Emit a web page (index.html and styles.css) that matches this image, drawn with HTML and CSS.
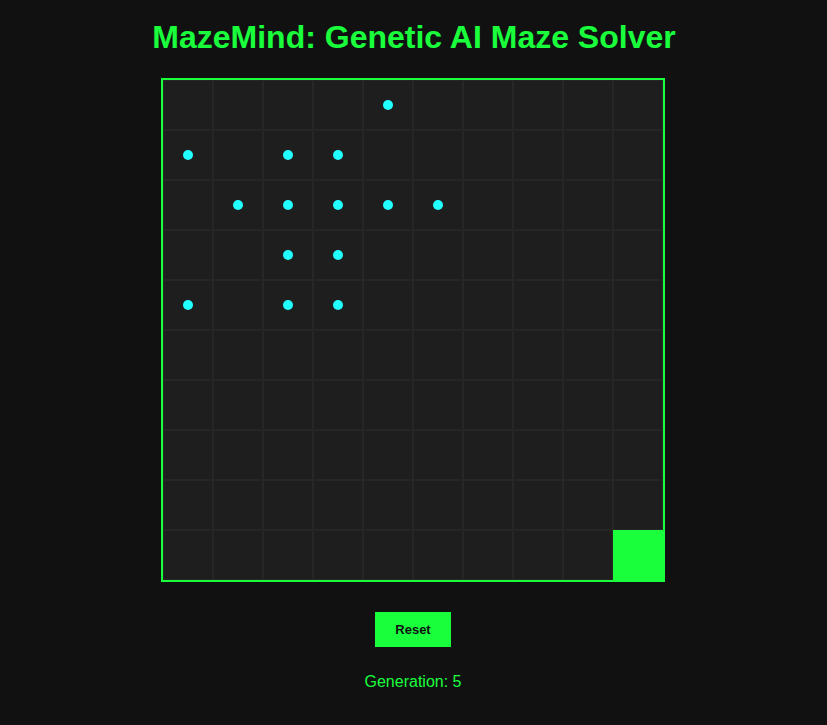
FILE: index.html
```html
<!DOCTYPE html>
<html>
<head>
<meta charset="utf-8">
<title>MazeMind</title>
<link rel="stylesheet" href="styles.css">
</head>
<body>
<main class="app">
  <h1 class="title">MazeMind: Genetic AI Maze Solver</h1>
  <div class="board">
    <div class="grid" id="grid"></div>
  </div>
  <button class="reset">Reset</button>
  <p class="gen">Generation: 5</p>
</main>
<script>
  var dots = ["4,0","0,1","2,1","3,1","1,2","2,2","3,2","4,2","5,2","2,3","3,3","0,4","2,4","3,4"];
  var grid = document.getElementById("grid");
  for (var r = 0; r < 10; r++) {
    for (var c = 0; c < 10; c++) {
      var cell = document.createElement("div");
      cell.className = "cell";
      if (r === 9 && c === 9) cell.className += " goal";
      if (dots.indexOf(c + "," + r) !== -1) {
        var d = document.createElement("span");
        d.className = "dot";
        cell.appendChild(d);
      }
      grid.appendChild(cell);
    }
  }
</script>
</body>
</html>
```

FILE: styles.css
```css
html, body {
  margin: 0;
  padding: 0;
  background: #111111;
}
body {
  font-family: "Liberation Sans", Arial, sans-serif;
  color: #1aff3c;
}
.app {
  display: flex;
  flex-direction: column;
  align-items: center;
  padding-right: 1px;
}
.title {
  margin: 19px 0 22px 2px;
  font-size: 32px;
  font-weight: bold;
  color: #1aff3c;
  line-height: 37px;
}
.board {
  border: 2px solid #1aff3c;
  background: #1e1e1e;
  width: 500px;
  height: 500px;
}
.grid {
  display: grid;
  grid-template-columns: repeat(10, 50px);
  grid-template-rows: repeat(10, 50px);
}
.cell {
  box-shadow: inset 1px 1px 0 #262626, inset -1px -1px 0 #262626;
  display: flex;
  align-items: center;
  justify-content: center;
}
.goal {
  background: #1aff3c;
  box-shadow: none;
}
.dot {
  width: 10px;
  height: 10px;
  border-radius: 50%;
  background: #22ffff;
}
.reset {
  margin-top: 30px;
  width: 76px;
  height: 35px;
  border: none;
  background: #1aff3c;
  color: #111111;
  font-family: "Liberation Sans", Arial, sans-serif;
  font-size: 13px;
  font-weight: bold;
  padding: 0;
  cursor: pointer;
}
.gen {
  margin: 25px 0 0;
  font-size: 16px;
  line-height: 20px;
  color: #1aff3c;
}
```
